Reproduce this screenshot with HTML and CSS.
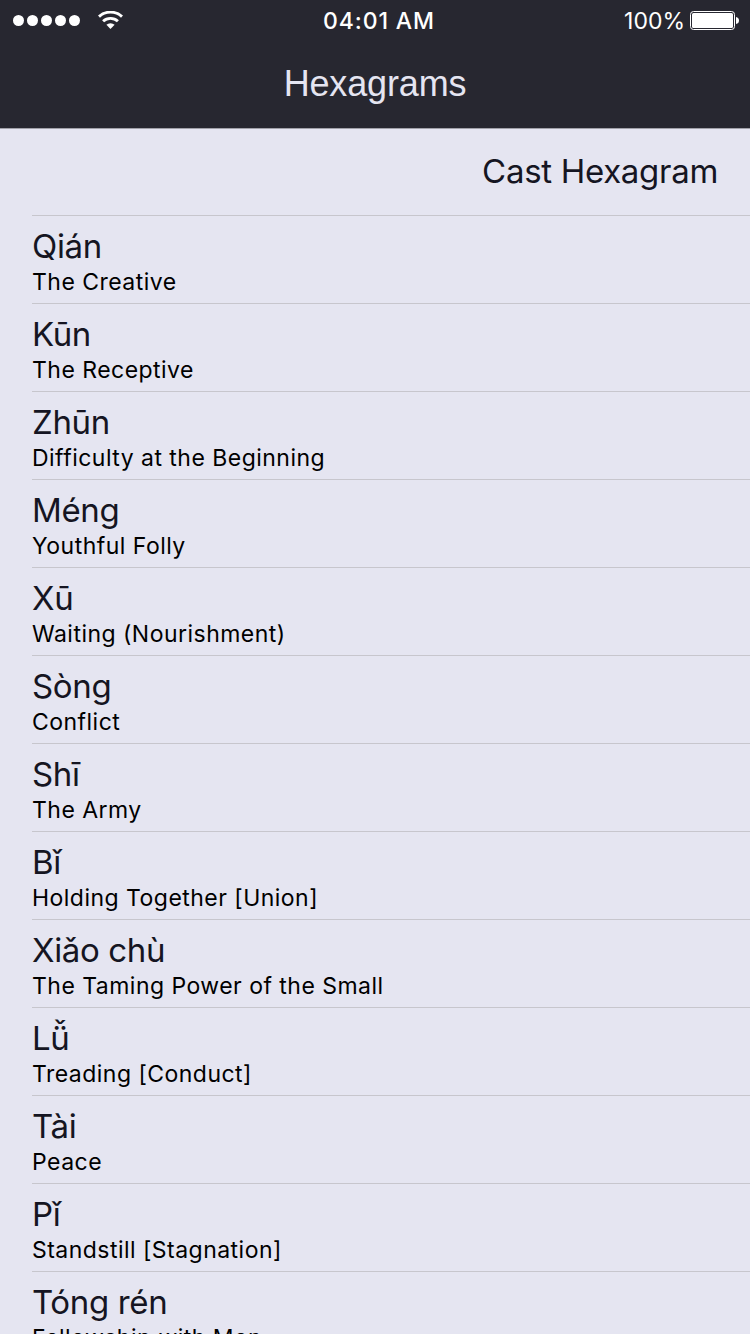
FILE: index.html
```html
<!DOCTYPE html>
<html lang="en">
<head>
<meta charset="utf-8">
<title>Hexagrams</title>
<link rel="stylesheet" href="styles.css">
</head>
<body>
<div class="screen">
<header class="header">
<div class="status">
<div class="signal"><i class="dot"></i><i class="dot"></i><i class="dot"></i><i class="dot"></i><i class="dot"></i>
<svg class="wifi" width="25" height="18" viewBox="0 0 25 18"><g fill="none" stroke="#fff" stroke-width="2.900"><path d="M1 5.600a17 17 0 0 1 23 0"/><path d="M5.100 10.300a10.800 10.800 0 0 1 14.800 0"/></g><path fill="#fff" d="M12.500 18l-4.100-4.200a6 6 0 0 1 8.200 0z"/></svg>
</div>
<time class="time">04:01 AM</time>
<div class="power"><span class="percent">100%</span>
<svg class="battery" width="49" height="19" viewBox="0 0 49 19"><rect x=".5" y=".5" width="44" height="18" rx="3" fill="none" stroke="#fff"/><rect x="2" y="2" width="41" height="15" rx="1.500" fill="#fff"/><path d="M46 6q3 .5 3 3.500t-3 3.500z" fill="#fff"/></svg>
</div>
</div>
<h1 class="title">Hexagrams</h1>
</header>
<div class="cast">Cast Hexagram</div>
<ul class="list">
<li class="row"><span class="name">Qián</span><span class="meaning">The Creative</span></li>
<li class="row"><span class="name">Kūn</span><span class="meaning">The Receptive</span></li>
<li class="row"><span class="name">Zhūn</span><span class="meaning">Difficulty at the Beginning</span></li>
<li class="row"><span class="name">Méng</span><span class="meaning">Youthful Folly</span></li>
<li class="row"><span class="name">Xū</span><span class="meaning">Waiting (Nourishment)</span></li>
<li class="row"><span class="name">Sòng</span><span class="meaning">Conflict</span></li>
<li class="row"><span class="name">Shī</span><span class="meaning">The Army</span></li>
<li class="row"><span class="name">Bǐ</span><span class="meaning">Holding Together [Union]</span></li>
<li class="row"><span class="name">Xiǎo chù</span><span class="meaning">The Taming Power of the Small</span></li>
<li class="row"><span class="name">Lǚ</span><span class="meaning">Treading [Conduct]</span></li>
<li class="row"><span class="name">Tài</span><span class="meaning">Peace</span></li>
<li class="row"><span class="name">Pǐ</span><span class="meaning">Standstill [Stagnation]</span></li>
<li class="row"><span class="name">Tóng rén</span><span class="meaning">Fellowship with Men</span></li>
</ul>
</div>
</body>
</html>
```

FILE: styles.css
```css
* { box-sizing: border-box; }
body { margin: 0; background: #e5e5f1; font-family: Inter, "Liberation Sans", sans-serif; }
.screen { width: 750px; height: 1334px; overflow: hidden; background: #e5e5f1; }
.header { height: 129px; background: #272730; color: #fff; border-bottom: 1px solid #a1a1a9; }
.status { display: grid; grid-template-columns: 1fr auto 1fr; height: 41px; align-items: center; padding: 0 11px 0 13px; }
.signal { display: flex; align-items: center; gap: 3px; }
.dot { width: 11px; height: 11px; border-radius: 50%; background: #fff; }
.wifi { margin: -1px 0 0 15px; }
.time { font-size: 23px; line-height: 29px; font-weight: 500; letter-spacing: .9px; padding: 1px 0 0 6px; }
.power { display: flex; justify-content: flex-end; align-items: center; gap: 5px; }
.percent { font-size: 23px; line-height: 29px; padding-top: 1px; }
.title { margin: 0; height: 87px; font: 400 36px/85px "Liberation Sans", sans-serif; letter-spacing: -.15px; text-align: center; color: #e5e5f1; }
.cast { height: 86px; padding-right: 32px; line-height: 85px; text-align: right; font-size: 33px; letter-spacing: -.3px; color: #151522; }
.list { margin: 0 0 0 32px; padding: 0; list-style: none; }
.row { display: flex; flex-direction: column; height: 88px; padding-top: 9px; border-top: 1px solid #c7c6cd; white-space: nowrap; }
.name { font-size: 33px; line-height: 42px; letter-spacing: -.35px; color: #151522; }
.meaning { margin-top: 1px; font-size: 23px; line-height: 28px; letter-spacing: .47px; color: #000; }
```
